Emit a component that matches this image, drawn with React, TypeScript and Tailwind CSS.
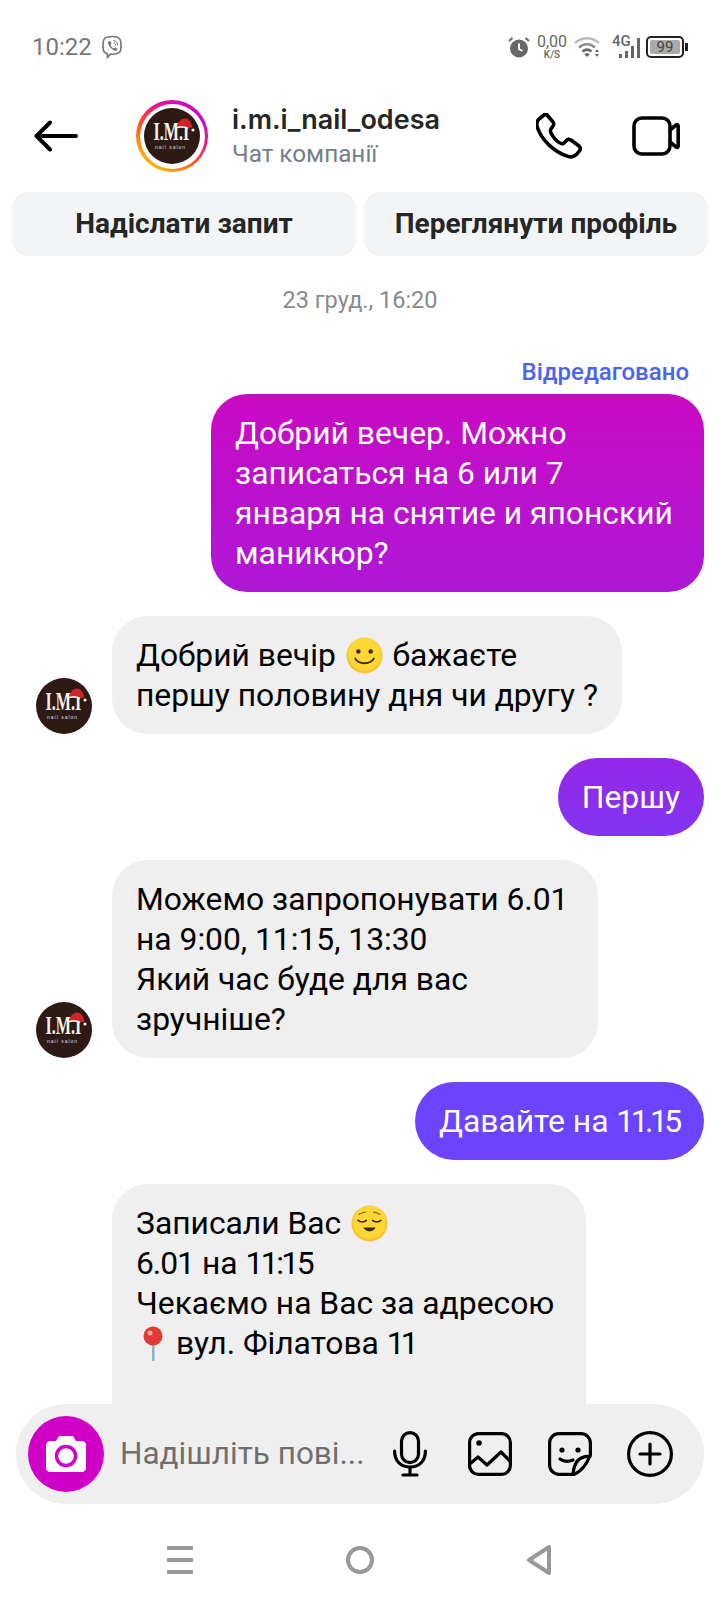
const Logo = () => (
  <svg viewBox="0 0 56 56" className="w-full h-full block">
    <circle cx="28" cy="28" r="28" fill="#2e1a14" />
    <g transform="translate(9.500 32) scale(0.62 1)">
      <text fontFamily="Liberation Serif, serif" fontWeight="700" fontSize="26" fill="#f4efe9">
        I.M.I
      </text>
    </g>
    <text x="11" y="41" letterSpacing="1" fontFamily="Liberation Sans, sans-serif" fontSize="5" fill="#e0d8d2">
      nail salon
    </text>
    <path d="M33 19c1-5 4-8.500 8-8.500 4 0 6.500 4 7.500 9l-4 .5c-3-2-8-2.500-11.500-1z" fill="#d3232a" />
    <path d="M33 19.500c4-1 8-.6 11 1" stroke="#f4efe9" strokeWidth="1.800" fill="none" />
    <circle cx="49" cy="22" r="1.600" fill="#f4efe9" />
  </svg>
);

const Smile = () => (
  <svg viewBox="0 0 36 36" className="inline-block w-[37px] h-[37px] mx-[2px] align-[-8px]">
    <circle cx="18" cy="18" r="17.500" fill="#fbc02d" />
    <circle cx="18" cy="17" r="16" fill="#fdd835" />
    <circle cx="12" cy="14" r="2.200" fill="#3e2a14" />
    <circle cx="24" cy="14" r="2.200" fill="#3e2a14" />
    <path d="M9 21c3 6 15 6 18 0" stroke="#3e2a14" strokeWidth="1.800" fill="none" strokeLinecap="round" />
  </svg>
);

const Relieved = () => (
  <svg viewBox="0 0 36 36" className="inline-block w-[37px] h-[37px] ml-[2px] align-[-8px]">
    <circle cx="18" cy="18" r="17.500" fill="#fbc02d" />
    <circle cx="18" cy="17" r="16" fill="#fdd835" />
    <path d="M7 15c2 2 6 2 8 0M21 15c2 2 6 2 8 0" stroke="#3e2a14" strokeWidth="1.600" fill="none" strokeLinecap="round" />
    <path d="M8 9c2-1 4-2 6-2M28 9c-2-1-4-2-6-2" stroke="#8a6a1c" strokeWidth="1.300" fill="none" strokeLinecap="round" />
    <path d="M12 22c3 5 9 5 12 0z" fill="#3e2a14" />
  </svg>
);

const Pin = () => (
  <svg viewBox="0 0 30 36" className="inline-block w-[30px] h-[36px] ml-[2px] align-[-8px]">
    <rect x="14" y="16" width="2.600" height="19" fill="#8fb4c4" />
    <circle cx="15" cy="10" r="9.500" fill="#e53935" />
    <circle cx="12" cy="7" r="2.500" fill="#f8a5a2" />
  </svg>
);

const Out = ({ className, children }: { className: string; children: React.ReactNode }) => (
  <div className={`self-end mr-4 px-6 py-[19px] text-white whitespace-nowrap ${className}`}>{children}</div>
);

const In = ({ children, avatar = true, className = "" }: { children: React.ReactNode; avatar?: boolean; className?: string }) => (
  <div className="flex items-end pl-9 gap-5">
    <div className="w-14 h-14 shrink-0">{avatar && <Logo />}</div>
    <div className={`bg-[#efefef] rounded-[36px] px-6 py-[19px] text-black whitespace-nowrap ${className}`}>{children}</div>
  </div>
);

export default function App() {
  return (
    <div className="w-[720px] h-[1600px] bg-white flex flex-col overflow-hidden font-['Roboto',sans-serif]">
      {/* Status bar */}
      <div className="h-[92px] shrink-0 flex items-center justify-between pl-[32px] pr-[32px] pt-[2px] text-[#777]">
        <div className="flex items-center gap-[10px]">
          <span className="text-[24px]">10:22</span>
          <svg viewBox="0 0 22 24" className="w-[22px] h-[24px]" fill="none" stroke="#777" strokeWidth="1.700">
            <path d="M11 1.500c-4 0-7 .6-8.400 2C1.200 5 1 7.500 1 10.500s.3 5.500 1.600 6.900c.8.800 1.700 1.200 2.900 1.500v3.300l3.200-3c3 .2 6.500-.1 8.700-1.800 1.500-1.300 1.600-4 1.600-6.900s-.2-5.500-1.600-7c-1.400-1.400-3.400-2-6.400-2z" />
            <path d="M7.500 6c1 0 2 2 2 2.600 0 .7-1 1-.8 1.600.4 1.200 1.600 2.500 2.900 3 .6.200 1-.8 1.600-.8.700 0 2.300 1.200 2.300 2 0 1-1.500 1.800-2.700 1.300-3-1.200-5.700-3.800-6.800-7C5.700 7.400 6.500 6 7.500 6z" fill="#777" stroke="none" />
            <path d="M11.500 5.500c2.500.2 4 1.800 4.200 4.500M11.800 7.800c1.100.1 1.700.8 1.800 2" strokeWidth="1" strokeLinecap="round" />
          </svg>
        </div>
        <div className="flex items-center">
          <svg viewBox="0 0 22 22" className="w-[22px] h-[22px] mr-[8px]">
            <circle cx="11" cy="12.500" r="9" fill="#666" />
            <path d="M11 7.500v5.500l3.500 2" stroke="#fff" strokeWidth="2" fill="none" />
            <path d="M1 5l3.500-3M21 5l-3.500-3" stroke="#666" strokeWidth="2" />
          </svg>
          <div className="flex flex-col items-center leading-none text-[#666] mr-[8px] w-[28px]">
            <span className="text-[16px] h-[15px] leading-[15px]">0,00</span>
            <span className="text-[10px] h-[11px] leading-[12px] font-medium">K/S</span>
          </div>
          <svg viewBox="0 0 26 22" className="w-[26px] h-[22px] mr-[12px]" fill="none">
            <path d="M1 7c7-6.500 17-6.500 24 0" stroke="#bbb" strokeWidth="2.500" />
            <path d="M5 11.500c5-4.500 11-4.500 16 0" stroke="#888" strokeWidth="2.500" />
            <path d="M8.500 15.500c3-2.500 6-2.500 9 0" stroke="#666" strokeWidth="2.500" />
            <path d="M13 21l-3-3c2-1 4-1 6 0z" fill="#666" />
            <path d="M23 13l-2 3h4zM23 21l-2-3h4z" fill="#666" />
          </svg>
          <div className="relative w-[28px] h-[22px] mr-[3px]">
            <span className="absolute left-0 -top-[2px] text-[15px] font-medium leading-none text-[#666]">4G</span>
            <svg viewBox="0 0 28 22" className="w-[28px] h-[22px]" fill="#666">
              <rect x="7" y="18" width="3" height="4" />
              <rect x="13" y="15" width="3" height="7" />
              <rect x="19" y="10" width="3" height="12" />
              <rect x="25" y="2" width="3" height="20" />
            </svg>
          </div>
          <div className="relative w-[38px] h-[22px] border-2 border-[#222] rounded-[5px] ml-[3px] p-[2px]">
            <div className="w-full h-full bg-[#aaa] rounded-[2px] flex items-center justify-center text-[15px] leading-none text-[#444]">99</div>
          </div>
          <div className="w-[3px] h-[8px] bg-[#222] ml-[1px]" />
        </div>
      </div>

      {/* Header */}
      <div className="h-[88px] shrink-0 flex items-center">
        <svg viewBox="0 0 44 32" className="ml-[34px] w-[44px] h-[32px]" fill="none" stroke="#000" strokeWidth="4" strokeLinecap="round" strokeLinejoin="round">
          <path d="M42 16H2.500M16 2.500L2.500 16 16 29.500" />
        </svg>
        <div className="ml-[58px] w-[72px] h-[72px] rounded-full p-[3.500px] bg-[linear-gradient(35deg,#ffc400_10%,#ff5a1f_40%,#f0108a_65%,#c800d0_90%)]">
          <div className="w-full h-full rounded-full bg-white p-[4.500px]">
            <Logo />
          </div>
        </div>
        <div className="ml-[24px] pt-[2px] flex flex-col">
          <span className="text-[27px] leading-[30px] font-semibold text-[#262626] font-['Inter',sans-serif]">i.m.i_nail_odesa</span>
          <span className="text-[24.300px] leading-[30px] mt-1 text-[#737f8c]">Чат компанії</span>
        </div>
        <div className="ml-auto flex items-center pr-[40px] gap-[50px]">
          <svg viewBox="0 0 46 46" className="w-[46px] h-[46px]" fill="none" stroke="#000" strokeWidth="3.600" strokeLinejoin="round">
            <path d="M8 2L3 6C0 9 0 12 2 16C6 27 18 39 31 43C35 45 38 44 41 41L44 37C45 35 44 34 43 33L35 27C33 26 31 26 30 28L28 30C27 31 26 31 24 30C20 28 17 24 15 20C14 18 14 18 15 16L17 13C18 12 18 10 17 9L11 2C10 1 9 1 8 2z" />
          </svg>
          <svg viewBox="0 0 48 40" className="w-[48px] h-[40px]" fill="none" stroke="#000" strokeWidth="3.600" strokeLinejoin="round">
            <rect x="2" y="2" width="36" height="36" rx="8" />
            <path d="M38 14l6-5c1.500-1 2.200 0 2.200 1v20c0 1-.7 2-2.200 1l-6-5" />
          </svg>
        </div>
      </div>

      {/* Actions */}
      <div className="shrink-0 flex gap-2 px-3 pt-3">
        <div className="flex-1 h-16 rounded-2xl bg-[#f3f4f6] flex items-center justify-center text-[28px] font-bold text-[#262626]">Надіслати запит</div>
        <div className="flex-1 h-16 rounded-2xl bg-[#f3f4f6] flex items-center justify-center text-[28px] font-bold text-[#262626]">Переглянути профіль</div>
      </div>

      {/* Messages */}
      <div className="flex-1 min-h-0 overflow-hidden flex flex-col text-[31.8px] leading-10">
        <div className="shrink-0 mt-7 h-8 text-center text-[23.500px] leading-8 text-[#8a8a8a]">23 груд., 16:20</div>
        <div className="shrink-0 mt-[44px] h-6 pr-[31px] text-right text-[24px] leading-6 font-medium text-[#4a63f0]">Відредаговано</div>
        <div className="shrink-0 mt-[10px] flex flex-col gap-6">
          <Out className="w-[493px] rounded-[36px] bg-[linear-gradient(180deg,#c90ac3,#ae18d6)]">
            Добрий вечер. Можно
            <br />
            записаться на 6 или 7
            <br />
            января на снятие и японский
            <br />
            маникюр?
          </Out>
          <In>
            Добрий вечір <Smile /> бажаєте
            <br />
            першу половину дня чи другу ?
          </In>
          <Out className="rounded-[39px] bg-[linear-gradient(180deg,#9527e8,#8135f0)]">Першу</Out>
          <In className="w-[486px]">
            Можемо запропонувати 6.01
            <br />
            на 9:00, 11:15, 13:30
            <br />
            Який час буде для вас
            <br />
            зручніше?
          </In>
          <Out className="w-[289px] rounded-[39px] bg-[#6c44ff]">
            Давайте на <span className="tracking-[-3.500px]">11.15</span>
          </Out>
          <In avatar={false} className="w-[474px] pb-[100px]">
            Записали Вас <Relieved />
            <br />
            <span className="tracking-[-1px]">6.01</span> на <span className="tracking-[-2.500px]">11:15</span>
            <br />
            Чекаємо на Вас за адресою
            <br />
            <Pin /> вул. Філатова <span className="tracking-[-4px]">11</span>
          </In>
        </div>
      </div>

      {/* Composer */}
      <div className="shrink-0 h-[100px] mx-4 rounded-full bg-[#efefef] flex items-center pl-3">
        <div className="w-[76px] h-[76px] rounded-full bg-[#d000c6] flex items-center justify-center">
          <svg viewBox="0 0 40 36" className="w-[40px] h-[36px]">
            <path d="M13 0h14l3 5h6c2 0 4 2 4 4v23c0 2-2 4-4 4H4c-2 0-4-2-4-4V9c0-2 2-4 4-4h6z" fill="#fff" />
            <circle cx="20" cy="20" r="9.500" fill="none" stroke="#d000c6" strokeWidth="3.400" />
          </svg>
        </div>
        <span className="ml-4 text-[31.500px] text-[#6f6f6f] whitespace-nowrap">Надішліть пові...</span>
        <div className="ml-auto flex items-center pr-[31px] gap-[36px]">
          <svg viewBox="0 0 34 46" className="w-[34px] h-[46px]" fill="none" stroke="#000" strokeWidth="3.200" strokeLinecap="round">
            <rect x="8.500" y="1.600" width="17" height="30" rx="8.500" />
            <path d="M1.600 20c0 10 6 16 15.400 16s15.400-6 15.400-16M17 36v8M10 44h14" />
          </svg>
          <svg viewBox="0 0 44 44" className="w-[44px] h-[44px] ml-[5px]" fill="none" stroke="#000" strokeWidth="3.200" strokeLinejoin="round">
            <rect x="1.600" y="1.600" width="40.800" height="40.800" rx="9" />
            <path d="M3 31l7-6 9 8 14-13 9 9" strokeLinecap="round" />
            <circle cx="11" cy="11" r="2.800" fill="#000" stroke="none" />
          </svg>
          <svg viewBox="0 0 44 44" className="w-[44px] h-[44px]" fill="none" stroke="#000" strokeWidth="3.200" strokeLinecap="round" strokeLinejoin="round">
            <path d="M26 42.400H11c-5 0-9.400-4-9.400-9.400V11c0-5 4-9.400 9.400-9.400h22c5 0 9.400 4 9.400 9.400v12C38 34 32 40 26 42.400z" />
            <path d="M42 24.500C32 24 26 30 25 42M12 27c4 3 8 3 13 1" />
            <circle cx="14" cy="18" r="2.600" fill="#000" stroke="none" />
            <circle cx="30" cy="18" r="2.600" fill="#000" stroke="none" />
          </svg>
          <svg viewBox="0 0 46 46" className="w-[46px] h-[46px] -ml-[1px]" fill="none" stroke="#000" strokeWidth="3.200" strokeLinecap="round">
            <circle cx="23" cy="23" r="21.400" />
            <path d="M23 13v20M13 23h20" />
          </svg>
        </div>
      </div>

      {/* Nav bar */}
      <div className="h-[96px] shrink-0 flex items-center pt-[16px]">
        <div className="ml-[167px] w-[26px] flex flex-col gap-[8px]">
          <div className="h-[4px] bg-[#999]" />
          <div className="h-[4px] bg-[#999]" />
          <div className="h-[4px] bg-[#999]" />
        </div>
        <div className="ml-[153px] w-[28px] h-[28px] rounded-full border-[4px] border-[#999]" />
        <svg viewBox="0 0 24 30" className="ml-[153px] w-[24px] h-[30px]" fill="none" stroke="#999" strokeWidth="4" strokeLinejoin="round">
          <path d="M22 2v26L2 15z" />
        </svg>
      </div>
    </div>
  );
}
